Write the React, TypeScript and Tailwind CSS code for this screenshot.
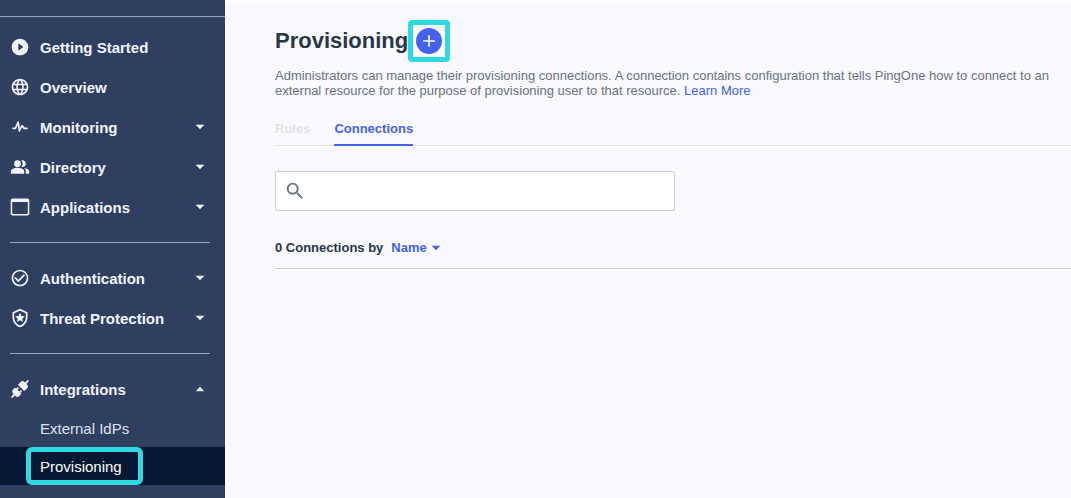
import { useState } from 'react'
import type { ComponentType } from 'react'
import { MdPlayCircleFilled, MdLanguage, MdPeopleAlt, MdCheckCircleOutline, MdSearch, MdAdd } from 'react-icons/md'

interface NavItem {
  label: string
  icon: ComponentType<{ className?: string }>
  children?: string[]
  expandable?: boolean
}

function PulseIcon({ className }: { className?: string }) {
  return (
    <svg viewBox="0 0 20 20" className={className} fill="none" stroke="currentColor" strokeWidth="1.7" strokeLinejoin="round" strokeLinecap="round">
      <path d="M3 11.3H5.4L8.2 5.2L9.4 13.8L12 8.6L14.2 11.4H17" />
    </svg>
  )
}

function WindowIcon({ className }: { className?: string }) {
  return (
    <svg viewBox="0 0 20 20" className={className} fill="currentColor">
      <path fillRule="evenodd" d="M2.5 1.5h15A1.8 1.8 0 0 1 19.3 3.3v13.4a1.8 1.8 0 0 1-1.8 1.8h-15A1.8 1.8 0 0 1 .7 16.7V3.3A1.8 1.8 0 0 1 2.5 1.5ZM2.2 5v11.5c0 .3.2.5.5.5h14.6c.3 0 .5-.2.5-.5V5Z" />
    </svg>
  )
}

function ShieldStarIcon({ className }: { className?: string }) {
  return (
    <svg viewBox="0 0 24 24" className={className} fill="currentColor">
      <path fillRule="evenodd" d="M21 11c0 5.55-3.84 10.74-9 12-5.16-1.26-9-6.45-9-12V5l9-4 9 4v6Zm-9 10c3.75-1 7-5.46 7-9.78V6.3l-7-3.12L5 6.3v4.92C5 15.54 8.25 20 12 21Z" />
      <path d="m12 5.8 1.7 3.8 4.1.4-3.1 2.8.9 4.1-3.6-2.2-3.6 2.2.9-4.1-3.1-2.8 4.1-.4Z" />
    </svg>
  )
}

function PlugIcon({ className }: { className?: string }) {
  return (
    <svg viewBox="0 0 20 20" className={className} fill="currentColor">
      <g transform="rotate(-45 10 10)">
        <rect x="-2" y="9.1" width="5" height="1.8" rx=".6" />
        <path d="M4.5 5.5h2.4a.8.8 0 0 1 .8.8v7.4a.8.8 0 0 1-.8.8H4.5A2.6 2.6 0 0 1 1.9 12V8a2.6 2.6 0 0 1 2.6-2.5Z" />
        <rect x="7" y="7" width="3" height="1.7" />
        <rect x="7" y="11.3" width="3" height="1.7" />
        <path d="M15.7 5.5h-3.4a.8.8 0 0 0-.8.8v7.4c0 .4.4.8.8.8h3.4a2.4 2.4 0 0 0 2.4-2.5V8a2.4 2.4 0 0 0-2.4-2.5Z" />
        <rect x="17" y="9.1" width="5" height="1.8" rx=".6" />
      </g>
    </svg>
  )
}

function Caret({ className }: { className?: string }) {
  return (
    <svg viewBox="0 0 10 6" className={className} fill="currentColor">
      <path d="M.7 .8h8.6L5 5.3Z" />
    </svg>
  )
}

const navGroups: NavItem[][] = [
  [
    { label: 'Getting Started', icon: MdPlayCircleFilled },
    { label: 'Overview', icon: MdLanguage },
    { label: 'Monitoring', icon: PulseIcon, expandable: true },
    { label: 'Directory', icon: MdPeopleAlt, expandable: true },
    { label: 'Applications', icon: WindowIcon, expandable: true },
  ],
  [
    { label: 'Authentication', icon: MdCheckCircleOutline, expandable: true },
    { label: 'Threat Protection', icon: ShieldStarIcon, expandable: true },
  ],
  [{ label: 'Integrations', icon: PlugIcon, expandable: true, children: ['External IdPs', 'Provisioning'] }],
]

function NavEntry({ item }: { item: NavItem }) {
  const [open, setOpen] = useState(!!item.children)
  const Icon = item.icon

  return (
    <li>
      <button
        onClick={() => setOpen(!open)}
        className="flex h-10 w-full items-center gap-2.5 pr-5 pl-2.5 text-left text-[15px] font-bold"
      >
        <Icon className="size-5 shrink-0" />
        <span className="flex-1">{item.label}</span>
        {item.expandable && (
          <Caret className={`h-1.5 w-2.5 ${open && item.children ? 'rotate-180' : ''}`} />
        )}
      </button>
      {open && item.children && (
        <ul>
          {item.children.map((child) =>
            child === 'Provisioning' ? (
              <li key={child} className="flex bg-[#051731] pl-[26px]">
                <a
                  href="#"
                  aria-current="page"
                  className="flex h-[38px] items-center rounded-md border-5 border-[#30d9e2] pr-4 pl-[9px] text-[15px] text-white"
                >
                  {child}
                </a>
              </li>
            ) : (
              <li key={child}>
                <a href="#" className="flex h-[38px] items-center pl-10 text-[15px] text-[#dfe3ee]">
                  {child}
                </a>
              </li>
            )
          )}
        </ul>
      )}
    </li>
  )
}

function Sidebar() {
  return (
    <nav className="w-[225px] shrink-0 bg-[#2f3f5f] pt-4 text-[#f0f5ff]">
      <hr className="mb-2.5 border-[#98a2b8]" />
      {navGroups.map((group, idx) => (
        <div key={idx}>
          {idx > 0 && <hr className="mr-[15px] ml-2.5 my-[15px] border-[#98a2b8]" />}
          <ul>
            {group.map((item) => (
              <NavEntry key={item.label} item={item} />
            ))}
          </ul>
        </div>
      ))}
    </nav>
  )
}

export default function App() {
  const [query, setQuery] = useState('')

  return (
    <div className="flex min-h-screen font-['Liberation_Sans',Arial,sans-serif] text-[13px] leading-[15px]">
      <Sidebar />
      <main className="min-w-0 flex-1 border-t-3 border-white bg-[#f9f9ff] pt-[17px] pl-[50px]">
        <div className="flex items-center">
          <h1 className="text-[22px] leading-6 font-bold text-[#273746]">Provisioning</h1>
          <div className="rounded-sm border-5 border-[#30d9e2] bg-white p-[3px]">
            <button
              aria-label="Add connection"
              className="flex size-[26px] items-center justify-center rounded-full bg-[#4462ed] text-white"
            >
              <MdAdd className="size-5" />
            </button>
          </div>
        </div>

        <p className="mt-1.5 text-[#68747f]">
          Administrators can manage their provisioning connections. A connection contains configuration that tells
          PingOne how to connect to an external resource for the purpose of provisioning user to that resource.{' '}
          <a href="#" className="inline-block text-[#4462ed]">Learn More</a>
        </p>

        <div role="tablist" className="mt-[23px] flex gap-6 border-b border-[#e3e4eb] font-bold">
          <button role="tab" aria-selected="false" disabled className="-mb-px border-b-2 border-transparent pb-2 text-[#e3e4eb]">
            Rules
          </button>
          <button role="tab" aria-selected="true" className="-mb-px border-b-2 border-[#4462ed] pb-2 text-[#4462ed]">
            Connections
          </button>
        </div>

        <label className="mt-[25px] flex h-10 w-full max-w-[400px] items-center gap-2 rounded-xs border border-[#caced3] bg-white pl-2">
          <MdSearch className="size-[22px] shrink-0 text-[#68747f]" />
          <input
            type="text"
            aria-label="Search"
            value={query}
            onChange={(e) => setQuery(e.target.value)}
            className="h-full min-w-0 flex-1 bg-transparent text-[15px] outline-none"
          />
        </label>

        <div className="mt-[29px] flex gap-2 border-b border-[#caced3] pb-[13px] font-bold">
          <label htmlFor="sort" className="text-[#273746]">0 Connections by</label>
          <div className="relative flex items-center text-[#4462ed]">
            <select id="sort" className="field-sizing-content appearance-none pr-3.5 outline-none">
              <option>Name</option>
            </select>
            <Caret className="pointer-events-none absolute right-0 h-1.5 w-2.5" />
          </div>
        </div>
      </main>
    </div>
  )
}
